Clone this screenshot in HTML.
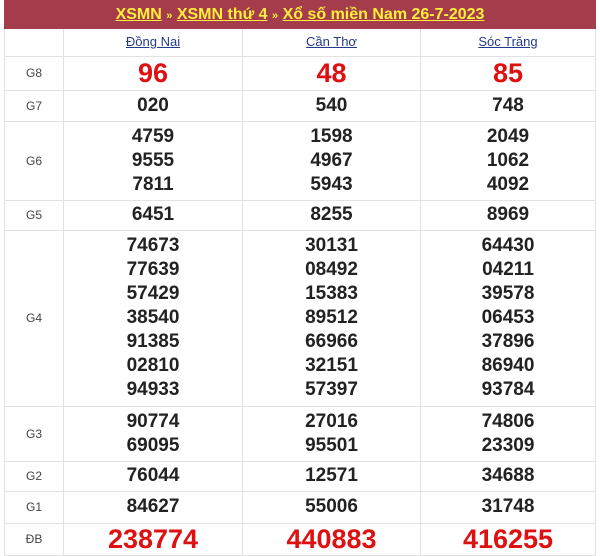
<!DOCTYPE html>
<html><head><meta charset="utf-8"><style>
*{margin:0;padding:0;box-sizing:border-box}
body{width:600px;height:555px;background:#fff;font-family:"Liberation Sans",Arial,sans-serif;overflow:hidden;position:relative}
.hd{position:absolute;left:4px;top:0;width:592px;height:29px;background:#a53c4c;color:#ffef3a;font-weight:bold;font-size:16px;text-align:center;line-height:29px}
.hd u{text-decoration:underline}
.hd span{font-size:11px;color:#ffef3a}
table{position:absolute;left:4px;top:29px;width:592px;border-collapse:collapse}
td{border:1px solid #e2e2e2;text-align:center;color:#222;font-weight:bold;font-size:19px;line-height:24px}
td.l{width:59px;font-weight:normal;font-size:12px;color:#444}
tr.h td{border-top:none;font-size:13px;font-weight:normal;color:#223a8a;height:27px;text-decoration:underline}
tr.h td.l{text-decoration:none}
.r{color:#d11;font-size:27px}
</style></head><body>
<div class="hd"><u>XSMN</u> <span>»</span> <u>XSMN thứ 4</u> <span>»</span> <u>Xổ số miền Nam 26-7-2023</u></div>
<table>
<tr class="h"><td class="l"></td><td style="width:179px">Đồng Nai</td><td style="width:178px">Cần Thơ</td><td>Sóc Trăng</td></tr>
<tr style="height:34px"><td class="l">G8</td><td class="r">96</td><td class="r">48</td><td class="r">85</td></tr>
<tr style="height:31px"><td class="l">G7</td><td>020</td><td>540</td><td>748</td></tr>
<tr style="height:79px"><td class="l">G6</td><td>4759<br>9555<br>7811</td><td>1598<br>4967<br>5943</td><td>2049<br>1062<br>4092</td></tr>
<tr style="height:30px"><td class="l">G5</td><td>6451</td><td>8255</td><td>8969</td></tr>
<tr style="height:176px"><td class="l">G4</td><td>74673<br>77639<br>57429<br>38540<br>91385<br>02810<br>94933</td><td>30131<br>08492<br>15383<br>89512<br>66966<br>32151<br>57397</td><td>64430<br>04211<br>39578<br>06453<br>37896<br>86940<br>93784</td></tr>
<tr style="height:55px"><td class="l">G3</td><td>90774<br>69095</td><td>27016<br>95501</td><td>74806<br>23309</td></tr>
<tr style="height:30px"><td class="l">G2</td><td>76044</td><td>12571</td><td>34688</td></tr>
<tr style="height:32px"><td class="l">G1</td><td>84627</td><td>55006</td><td>31748</td></tr>
<tr style="height:32px"><td class="l">ĐB</td><td class="r">238774</td><td class="r">440883</td><td class="r">416255</td></tr>
</table>
</body></html>
